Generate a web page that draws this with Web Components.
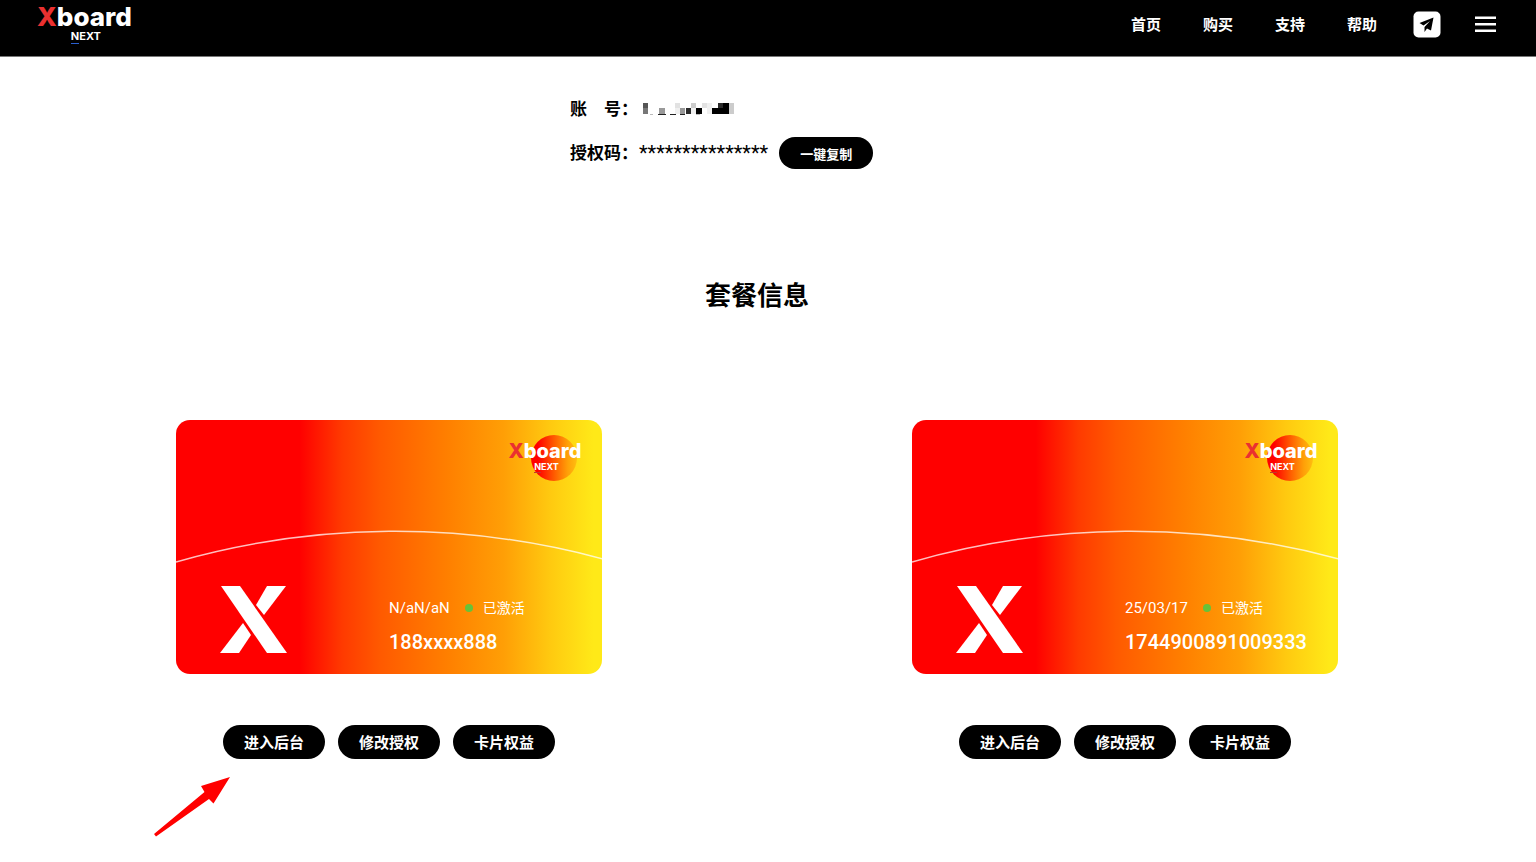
<!DOCTYPE html>
<html lang="zh-CN">
<head>
<meta charset="UTF-8">
<meta name="viewport" content="width=device-width, initial-scale=1.0">
<title>Xboard NEXT</title>
<style>
  body {
    margin: 0;
    background: #fff;
    color: #000;
    font-family: Roboto, "Noto Sans CJK SC", sans-serif;
  }
</style>
</head>
<body>
<xb-header>
  <a href="#home">首页</a>
  <a href="#buy">购买</a>
  <a href="#support">支持</a>
  <a href="#help">帮助</a>
</xb-header>
<xb-page>
  <xb-account></xb-account>
  <span slot="title">套餐信息</span>
  <xb-plan slot="plans" date="N/aN/aN" number="188xxxx888">
    <xb-arrow></xb-arrow>
  </xb-plan>
  <xb-plan slot="plans" date="25/03/17" number="1744900891009333"></xb-plan>
</xb-page>

<script>
  class XbBrand extends HTMLElement {
    constructor() {
      super();
      this.attachShadow({ mode: 'open' });
      this.shadowRoot.innerHTML = `
        <style>
          :host {
            display: inline-flex;
            flex-direction: column;
            align-items: center;
            color: #fff;
            font-family: Inter, sans-serif;
            font-weight: 800;
            font-size: 26px;
            line-height: 28px;
          }
          .x {
            color: #ea3030;
          }
          .next {
            padding-left: 3px;
            font-size: 11px;
            font-weight: 700;
            line-height: 11px;
          }
          .n {
            border-bottom: 1px solid #2a5fd0;
          }
          :host([small]) {
            font-size: 20px;
            line-height: 21px;
          }
          :host([small]) .next {
            font-size: 9px;
            line-height: 9px;
          }
          :host([small]) .n {
            border-bottom-color: #c0392b;
          }
        </style>
        <div><span class="x">X</span>board</div>
        <div class="next"><span class="n">N</span>EXT</div>
      `;
    }
  }
  customElements.define('xb-brand', XbBrand);

  class XbHeader extends HTMLElement {
    constructor() {
      super();
      this.attachShadow({ mode: 'open' });
      this.shadowRoot.innerHTML = `
        <style>
          :host {
            display: block;
            background: #000;
            border-bottom: 1px solid #777;
          }
          header {
            display: flex;
            justify-content: space-between;
            height: 56px;
            padding: 0 40px 0 37px;
            box-sizing: border-box;
          }
          xb-brand {
            padding-top: 3px;
            align-self: flex-start;
          }
          nav {
            display: flex;
            align-items: center;
            height: 50px;
          }
          .links {
            display: flex;
            gap: 42px;
            margin-right: 36px;
          }
          ::slotted(a) {
            color: #fff;
            text-decoration: none;
            font-size: 15px;
            line-height: 24px;
            font-weight: 700;
          }
          .telegram {
            display: block;
            height: 28px;
            margin-right: 33px;
          }
          button {
            border: 0;
            padding: 0;
            background: none;
            height: 22px;
            cursor: pointer;
          }
          svg {
            display: block;
          }
        </style>
        <header>
          <xb-brand></xb-brand>
          <nav>
            <div class="links"><slot></slot></div>
            <a class="telegram" href="#telegram" aria-label="Telegram">
              <svg width="28" height="28" viewBox="0 0 28 28">
                <rect x="0.5" y="0.5" width="27" height="26" rx="5" fill="#fff"/>
                <path d="M20.500 6.500 6.500 12l4 2.500 6.500-4.500-5.500 6v5l2.500-3.500 4 2z" fill="#000"/>
              </svg>
            </a>
            <button type="button" aria-label="菜单">
              <svg width="22" height="22" viewBox="0 0 22 22" fill="#fff">
                <path d="M1 2.500h21V5H1zM1 9h21v2.500H1zM1 15.500h21V18H1z"/>
              </svg>
            </button>
          </nav>
        </header>
      `;
    }
  }
  customElements.define('xb-header', XbHeader);

  class XbPage extends HTMLElement {
    constructor() {
      super();
      this.attachShadow({ mode: 'open' });
      this.shadowRoot.innerHTML = `
        <style>
          :host {
            display: block;
            padding: 36px 43px 0 21px;
          }
          h2 {
            margin: 107px 0 104px;
            font-size: 26px;
            line-height: 40px;
            font-weight: 700;
            text-align: center;
          }
          .plans {
            display: grid;
            grid-template-columns: 1fr 1fr;
          }
        </style>
        <main>
          <slot></slot>
          <h2><slot name="title"></slot></h2>
          <div class="plans"><slot name="plans"></slot></div>
        </main>
      `;
    }
  }
  customElements.define('xb-page', XbPage);

  // Black pill button
  class XbButton extends HTMLElement {
    constructor() {
      super();
      this.attachShadow({ mode: 'open' });
      this.shadowRoot.innerHTML = `
        <style>
          :host {
            display: inline-block;
          }
          button {
            display: block;
            border: 0;
            border-radius: 17px;
            height: 34px;
            padding: 0 21px;
            background: #000;
            color: #fff;
            font-family: inherit;
            font-size: 15px;
            font-weight: 700;
            cursor: pointer;
          }
          :host([small]) button {
            height: 32px;
            font-size: 13px;
          }
        </style>
        <button type="button"><slot></slot></button>
      `;
    }
  }
  customElements.define('xb-button', XbButton);

  class XbAccount extends HTMLElement {
    constructor() {
      super();
      this.attachShadow({ mode: 'open' });
      this.shadowRoot.innerHTML = `
        <style>
          :host {
            display: block;
            width: 374px;
            margin: 0 auto;
            font-size: 17px;
            line-height: 32px;
          }
          dl, dd {
            margin: 0;
          }
          dl {
            display: grid;
            gap: 12px;
          }
          .row {
            display: flex;
            align-items: center;
          }
          dt {
            width: 69px;
            font-weight: 700;
            white-space: pre;
          }
          dd {
            display: flex;
            align-items: center;
          }
          .mask {
            margin-left: 4px;
          }
          .code {
            font-size: 20px;
          }
          xb-button {
            margin-left: 11px;
          }
        </style>
        <dl>
          <div class="row">
            <dt>账　号：</dt>
            <dd>
              <svg class="mask" width="92" height="13" viewBox="0 0 276 39" shape-rendering="crispEdges" aria-hidden="true">
                <path d="M0 0h15v32H0z" fill="#777"/>
                <path d="M0 0h15v15H0z" fill="#555"/>
                <path d="M48 16h17v16H48zM111 16h16v16h-16z" fill="#999"/>
                <path d="M44 32h24v3H44zM81 32h18v4H81zM111 34h14v3h-14z" fill="#222"/>
                <path d="M21 33h9v3h-9zM160 32h10v4h-10z" fill="#bbb"/>
                <path d="M96 0h15v16H96zM176 0h16v16h-16z" fill="#e2e2e2"/>
                <path d="M96 16h15v16H96zM144 16h16v16h-16zM192 0h16v32h-16z" fill="#f0f0f0"/>
                <path d="M144 0h16v16h-16zM257 0h16v32h-16z" fill="#ccc"/>
                <path d="M128 16h15v16h-15zM225 0h16v16h-16z" fill="#2b2b2b"/>
                <path d="M160 16h16v16h-16zM208 16h49v16h-49zM241 0h16v16h-16z" fill="#000"/>
              </svg>
            </dd>
          </div>
          <div class="row">
            <dt>授权码：</dt>
            <dd>
              <span class="code">***************</span>
              <xb-button small>一键复制</xb-button>
            </dd>
          </div>
        </dl>
      `;
    }
  }
  customElements.define('xb-account', XbAccount);

  // Red arrow pointing at the first action of a plan
  class XbArrow extends HTMLElement {
    constructor() {
      super();
      this.attachShadow({ mode: 'open' });
      this.shadowRoot.innerHTML = `
        <style>
          :host {
            display: block;
          }
          svg {
            display: block;
          }
        </style>
        <svg width="78" height="62" viewBox="0 0 78 62" aria-hidden="true">
          <path d="M77 1 48 10l3.500 6L1 58l2 2.500L56 23l4.500 4.500z" fill="#f00"/>
        </svg>
      `;
    }
  }
  customElements.define('xb-arrow', XbArrow);

  class XbPlan extends HTMLElement {
    constructor() {
      super();
      this.attachShadow({ mode: 'open' });
    }

    connectedCallback() {
      this.render();
    }

    render() {
      this.shadowRoot.innerHTML = `
        <style>
          :host {
            display: flex;
            flex-direction: column;
            align-items: center;
          }
          .card {
            position: relative;
            display: flex;
            flex-direction: column;
            justify-content: space-between;
            box-sizing: border-box;
            width: 58%;
            min-width: 400px;
            aspect-ratio: 427 / 254;
            padding: 15px 0 20px;
            border-radius: 14px;
            overflow: hidden;
            color: #fff;
            background: linear-gradient(90deg, #f00 29%, #ff3a00 39%, #ff5a00 48%, #ff8000 64%, #ff9f06 77%, #ffca10 88%, #ffe918 98%);
          }
          .arc {
            position: absolute;
            inset: 0;
            width: 100%;
            height: 100%;
          }
          .top {
            display: flex;
            justify-content: flex-end;
            padding-right: 21px;
          }
          .badge {
            position: relative;
            height: 46px;
          }
          .badge::before {
            content: "";
            position: absolute;
            left: 22px;
            top: 0;
            width: 46px;
            height: 46px;
            border-radius: 50%;
            background: linear-gradient(90deg, #f00 15%, #ff5a00 50%, #ffa008 80%, #ffbe10);
          }
          xb-brand {
            position: relative;
            padding-top: 6px;
          }
          .bottom {
            display: grid;
            grid-template-columns: 1fr 1fr;
            align-items: end;
          }
          .mark {
            display: block;
            margin-left: 44px;
          }
          .status {
            display: flex;
            align-items: center;
            font-size: 14px;
            line-height: 20px;
            margin-bottom: 12px;
          }
          .date {
            font-size: 15px;
          }
          .dot {
            width: 8px;
            height: 8px;
            margin: 0 10px 0 15px;
            border-radius: 50%;
            background: #67c23a;
          }
          .number {
            font-size: 20px;
            line-height: 24px;
            font-weight: 500;
          }
          .actions {
            display: flex;
            gap: 13px;
            margin-top: 51px;
          }
          ::slotted(xb-arrow) {
            align-self: flex-start;
            margin: 17px 0 0 18%;
          }
        </style>
        <div class="card">
          <svg class="arc" viewBox="0 0 427 254" fill="none" aria-hidden="true">
            <path d="M0 142A797 797 0 0 1 427 139" stroke="#fff" stroke-opacity="0.75" stroke-width="1.500"/>
          </svg>
          <div class="top">
            <div class="badge"><xb-brand small></xb-brand></div>
          </div>
          <div class="bottom">
            <svg class="mark" width="67" height="68" viewBox="0 0 67 68" fill="#fff" aria-hidden="true">
              <path d="M1 0h19l47 67H47z"/>
              <path d="M47 0h19L44 29l-8-10z"/>
              <path d="M0 67h19l12-18-8-12z"/>
            </svg>
            <div>
              <div class="status">
                <span class="date">${this.getAttribute('date')}</span>
                <span class="dot"></span>
                <span>已激活</span>
              </div>
              <div class="number">${this.getAttribute('number')}</div>
            </div>
          </div>
        </div>
        <div class="actions">
          <xb-button>进入后台</xb-button>
          <xb-button>修改授权</xb-button>
          <xb-button>卡片权益</xb-button>
        </div>
        <slot></slot>
      `;
    }
  }
  customElements.define('xb-plan', XbPlan);
</script>
</body>
</html>
